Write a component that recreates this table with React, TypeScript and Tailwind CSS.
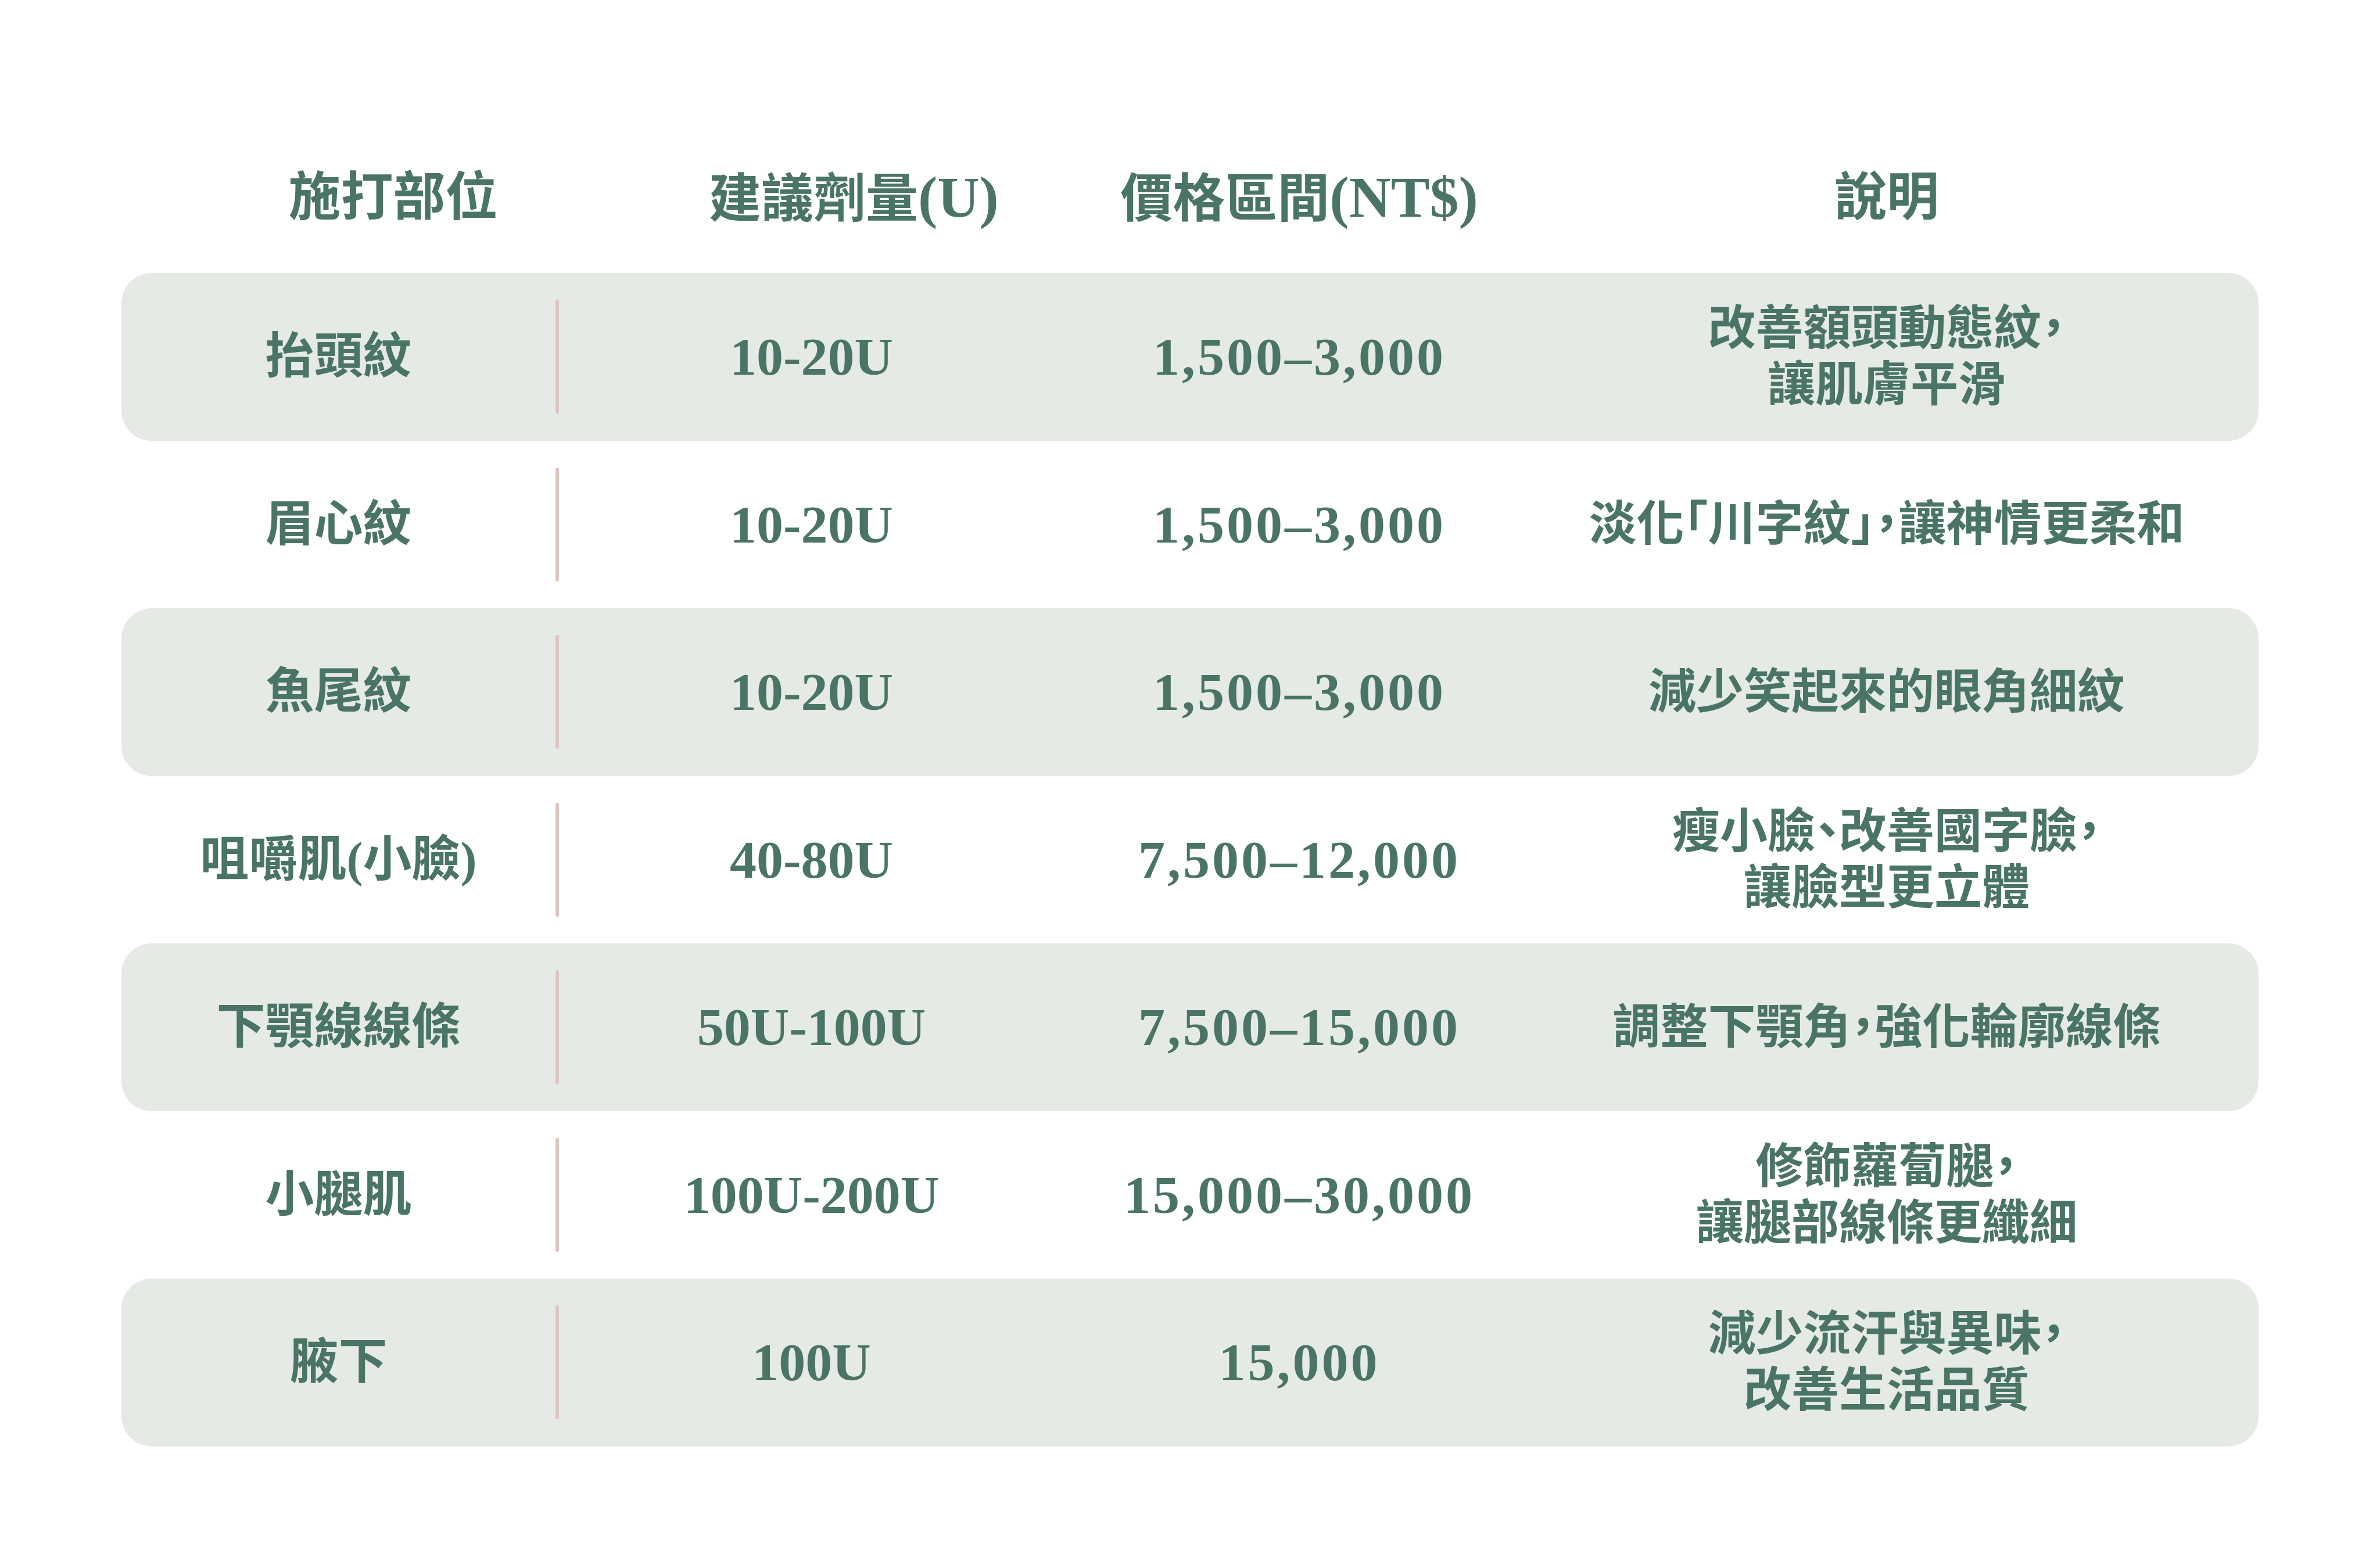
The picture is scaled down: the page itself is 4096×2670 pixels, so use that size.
const rows = [
  { part: '抬頭紋', dose: '10-20U', price: '1,500–3,000', desc: ['改善額頭動態紋，', '讓肌膚平滑'] },
  { part: '眉心紋', dose: '10-20U', price: '1,500–3,000', desc: ['淡化「川字紋」，讓神情更柔和'] },
  { part: '魚尾紋', dose: '10-20U', price: '1,500–3,000', desc: ['減少笑起來的眼角細紋'] },
  { part: '咀嚼肌(小臉)', dose: '40-80U', price: '7,500–12,000', desc: ['瘦小臉、改善國字臉，', '讓臉型更立體'] },
  { part: '下顎線線條', dose: '50U-100U', price: '7,500–15,000', desc: ['調整下顎角，強化輪廓線條'] },
  { part: '小腿肌', dose: '100U-200U', price: '15,000–30,000', desc: ['修飾蘿蔔腿，', '讓腿部線條更纖細'] },
  { part: '腋下', dose: '100U', price: '15,000', desc: ['減少流汗與異味，', '改善生活品質'] },
]

const font = "font-['Liberation_Serif','Noto_Sans_CJK_TC',serif]"

export default function App() {
  return (
    <div className={`min-h-screen bg-white text-[#4a7566] ${font}`}>
      <div className="w-[3678px] mx-auto pt-[240px] pb-[120px]">
        {/* Header */}
        <div className="grid grid-cols-[753px_869px_810px_1212px] h-[200px] items-center font-bold text-[90px] leading-none">
          <div className="pl-[182px] text-center">施打部位</div>
          <div className="pl-[146px] text-center">
            建議劑量<span className="text-[100px]">(U)</span>
          </div>
          <div className="text-center">
            價格區間<span className="text-[100px]">(NT$)</span>
          </div>
          <div className="text-center">說明</div>
        </div>

        {/* Rows */}
        <div className="mt-[30px] flex flex-col">
          {rows.map((r, i) => (
            <div
              key={r.part}
              className={`grid grid-cols-[753px_869px_810px_1212px] h-[288.5px] items-center rounded-[52px] ${
                i % 2 === 0 ? 'bg-[#e5eae5]' : 'bg-white'
              }`}
            >
              <div className="flex items-center h-full">
                <div className="flex-1 text-center text-[84px] font-bold leading-none">{r.part}</div>
                <div className="w-[6px] h-[196px] rounded-full bg-[#dbc7c2]" />
              </div>
              <div className="text-center text-[92px] font-bold leading-none">{r.dose}</div>
              <div className="text-center text-[92px] font-bold leading-none tracking-[4px]">{r.price}</div>
              <div className="text-center text-[82px] font-bold leading-[97px] [font-feature-settings:'halt']">
                {r.desc.map((line) => (
                  <div key={line}>{line}</div>
                ))}
              </div>
            </div>
          ))}
        </div>
      </div>
    </div>
  )
}
